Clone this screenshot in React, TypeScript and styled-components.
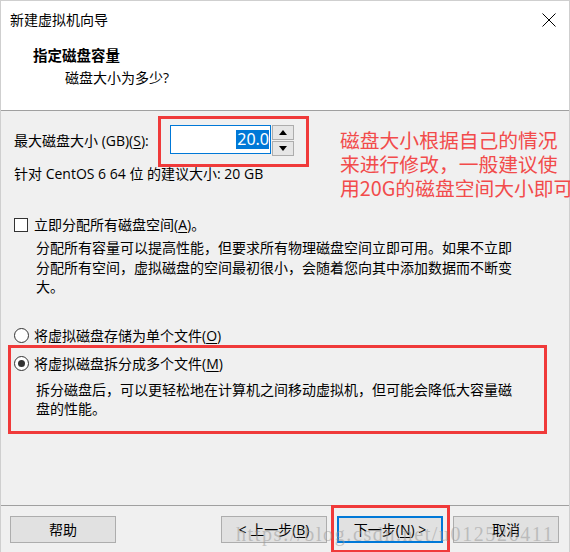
import React from "react";
import styled, { createGlobalStyle } from "styled-components";

const GlobalStyle = createGlobalStyle`
  html, body {
    margin: 0;
    padding: 0;
    width: 570px;
    height: 552px;
    overflow: hidden;
    background: #f0f0f0;
  }
  body {
    font-family: "Open Sans", "Noto Sans CJK SC", sans-serif;
    font-size: 14px;
    color: #000;
  }
  u { text-decoration-thickness: 1px; text-underline-offset: 2px; }
`;

const Window = styled.div`
  position: relative;
  width: 570px;
  height: 552px;
  box-sizing: border-box;
  border: 1px solid #cfcfcf;
  border-bottom: none;
  background: #f0f0f0;
  display: flex;
  flex-direction: column;
`;

const Header = styled.header`
  background: #fff;
  height: 109px;
  border-bottom: 1px solid #a0a0a0;
  display: flex;
  flex-direction: column;
`;

const TitleBar = styled.div`
  height: 38px;
  display: flex;
  align-items: center;
  justify-content: space-between;
  padding: 0 12px 0 9px;
`;

const Title = styled.div`
  font-size: 14px;
  line-height: 20px;
`;

const CloseButton = styled.div`
  width: 16px;
  height: 16px;
  display: flex;
  align-items: center;
  justify-content: center;
`;

const HeaderText = styled.div`
  padding-left: 32px;
  margin-top: 7px;
`;

const StepTitle = styled.div`
  font-weight: 700;
  font-size: 14.5px;
  line-height: 20px;
`;

const StepSubtitle = styled.div`
  margin-top: 2px;
  margin-left: 32px;
  line-height: 20px;
`;

const Body = styled.main`
  flex: 1;
  padding: 0 13px;
  display: flex;
  flex-direction: column;
`;

const TopSection = styled.section`
  display: flex;
  align-items: flex-start;
`;

const SizeColumn = styled.div`
  flex: none;
  width: 326px;
  padding-top: 15px;
`;

const SizeRow = styled.div`
  display: flex;
  align-items: center;
  height: 29px;
`;

const SizeLabel = styled.label`
  width: 156px;
  line-height: 20px;
  white-space: nowrap;
`;

const SpinnerWrap = styled.div`
  position: relative;
  display: flex;
`;

const SpinInput = styled.div`
  width: 98px;
  height: 27px;
  border: 1px solid #0078d7;
  background: #fff;
  display: flex;
  align-items: center;
  justify-content: flex-end;
  padding-right: 1px;
  font-family: "Noto Sans", sans-serif;
  font-size: 16px;
`;

const Selected = styled.span`
  background: #0078d7;
  color: #fff;
  line-height: 19px;
  padding: 0 0 0 1px;
`;

const SpinButtons = styled.div`
  display: flex;
  flex-direction: column;
  margin-left: 1px;
`;

const SpinButton = styled.div`
  width: 20px;
  height: 13px;
  border: 1px solid #adadad;
  background: #e6e6e6;
  display: flex;
  align-items: center;
  justify-content: center;
  & + & {
    margin-top: 1px;
  }
`;

const RedFrame = styled.div<{ $l: number; $t: number; $r: number; $b: number }>`
  position: absolute;
  left: ${(p) => p.$l}px;
  top: ${(p) => p.$t}px;
  right: ${(p) => p.$r}px;
  bottom: ${(p) => p.$b}px;
  border: 3px solid #f03a3a;
  pointer-events: none;
`;

const Recommend = styled.div`
  margin-top: 9px;
  line-height: 20px;
  white-space: nowrap;
`;

const Annotation = styled.div`
  flex: none;
  margin-top: 17px;
  color: #f24b4b;
  font-family: "Noto Sans CJK SC", sans-serif;
  font-size: 19.8px;
  line-height: 24px;
  white-space: pre;
`;

const OptionRow = styled.div<{ $mt: number }>`
  display: flex;
  align-items: center;
  margin-top: ${(p) => p.$mt}px;
  height: 20px;
  line-height: 20px;
`;

const CheckBox = styled.span`
  width: 12px;
  height: 12px;
  border: 1px solid #333;
  background: #fff;
  margin-right: 6px;
  flex: none;
`;

const Radio = styled.span<{ $checked?: boolean }>`
  position: relative;
  width: 13px;
  height: 13px;
  border-radius: 50%;
  border: 1px solid #333;
  background: #fff;
  margin-right: 5px;
  flex: none;
  &::after {
    content: "";
    display: ${(p) => (p.$checked ? "block" : "none")};
    position: absolute;
    left: 3px;
    top: 3px;
    width: 7px;
    height: 7px;
    border-radius: 50%;
    background: #333;
  }
`;

const Description = styled.p<{ $mt: number }>`
  margin: ${(p) => p.$mt}px 0 0 22px;
  width: 476px;
  line-height: 19.5px;
`;

const RadioGroup = styled.div`
  position: relative;
`;

const Footer = styled.footer`
  position: relative;
  height: 47px;
  border-top: 1px solid #a0a0a0;
  display: flex;
  align-items: flex-start;
  padding: 10px 10px 0 9px;
  box-sizing: border-box;
`;

const Spacer = styled.div`
  flex: 1;
`;

const ButtonWrap = styled.div`
  position: relative;
  margin-left: 10px;
`;

const Button = styled.div<{ $default?: boolean }>`
  width: 106px;
  height: 27px;
  box-sizing: border-box;
  border: ${(p) => (p.$default ? "2px solid #0078d7" : "1px solid #adadad")};
  background: #e1e1e1;
  display: flex;
  align-items: center;
  justify-content: center;
  line-height: 20px;
  white-space: pre;
`;

const Watermark = styled.div`
  position: absolute;
  left: 235px;
  top: 18px;
  font-family: "Liberation Serif", serif;
  font-size: 20px;
  line-height: 20px;
  letter-spacing: 1.6px;
  color: rgba(150, 150, 150, 0.5);
  pointer-events: none;
  white-space: nowrap;
`;

const Arrow = ({ up }: { up?: boolean }) => (
  <svg width="8" height="5" viewBox="0 0 8 5">
    <path d={up ? "M0 5 L4 0 L8 5 Z" : "M0 0 L8 0 L4 5 Z"} fill="#000" />
  </svg>
);

export default function App() {
  return (
    <>
      <GlobalStyle />
      <Window>
        <Header>
          <TitleBar>
            <Title>新建虚拟机向导</Title>
            <CloseButton>
              <svg width="14" height="14" viewBox="0 0 14 14">
                <path d="M0.5 0.5 L13.5 13.5 M13.5 0.5 L0.5 13.5" stroke="#000" strokeWidth="1" />
              </svg>
            </CloseButton>
          </TitleBar>
          <HeaderText>
            <StepTitle>指定磁盘容量</StepTitle>
            <StepSubtitle>磁盘大小为多少?</StepSubtitle>
          </HeaderText>
        </Header>

        <Body>
          <TopSection>
            <SizeColumn>
              <SizeRow>
                <SizeLabel>
                  最大磁盘大小 (GB)(<u>S</u>):
                </SizeLabel>
                <SpinnerWrap>
                  <SpinInput>
                    <Selected>20.0</Selected>
                  </SpinInput>
                  <SpinButtons>
                    <SpinButton>
                      <Arrow up />
                    </SpinButton>
                    <SpinButton>
                      <Arrow />
                    </SpinButton>
                  </SpinButtons>
                  <RedFrame $l={-12} $t={-9} $r={-15} $b={-11} />
                </SpinnerWrap>
              </SizeRow>
              <Recommend>针对 CentOS 6 64 位 的建议大小: 20 GB</Recommend>
            </SizeColumn>
            <Annotation>
              {"磁盘大小根据自己的情况\n来进行修改，一般建议使\n用20G的磁盘空间大小即可"}
            </Annotation>
          </TopSection>

          <OptionRow $mt={15}>
            <CheckBox />
            <span>
              立即分配所有磁盘空间(<u>A</u>)。
            </span>
          </OptionRow>
          <Description $mt={3}>
            分配所有容量可以提高性能，但要求所有物理磁盘空间立即可用。如果不立即分配所有空间，虚拟磁盘的空间最初很小，会随着您向其中添加数据而不断变大。
          </Description>

          <OptionRow $mt={29}>
            <Radio />
            <span>
              将虚拟磁盘存储为单个文件(<u>O</u>)
            </span>
          </OptionRow>
          <RadioGroup>
            <OptionRow $mt={8}>
              <Radio $checked />
              <span>
                将虚拟磁盘拆分成多个文件(<u>M</u>)
              </span>
            </OptionRow>
            <Description $mt={6}>
              拆分磁盘后，可以更轻松地在计算机之间移动虚拟机，但可能会降低大容量磁盘的性能。
            </Description>
            <RedFrame $l={-6} $t={-1} $r={9} $b={-15} />
          </RadioGroup>
        </Body>

        <Footer>
          <Button>帮助</Button>
          <Spacer />
          <ButtonWrap>
            <Button>
              {"< 上一步("}
              <u>B</u>
              {")"}
            </Button>
          </ButtonWrap>
          <ButtonWrap>
            <Button $default>
              {"下一步("}
              <u>N</u>
              {") >"}
            </Button>
            <RedFrame $l={-6} $t={-11} $r={-7} $b={-10} />
          </ButtonWrap>
          <ButtonWrap>
            <Button>取消</Button>
          </ButtonWrap>
          <Watermark>https://blog.csdn.net/u012526411</Watermark>
        </Footer>
      </Window>
    </>
  );
}
